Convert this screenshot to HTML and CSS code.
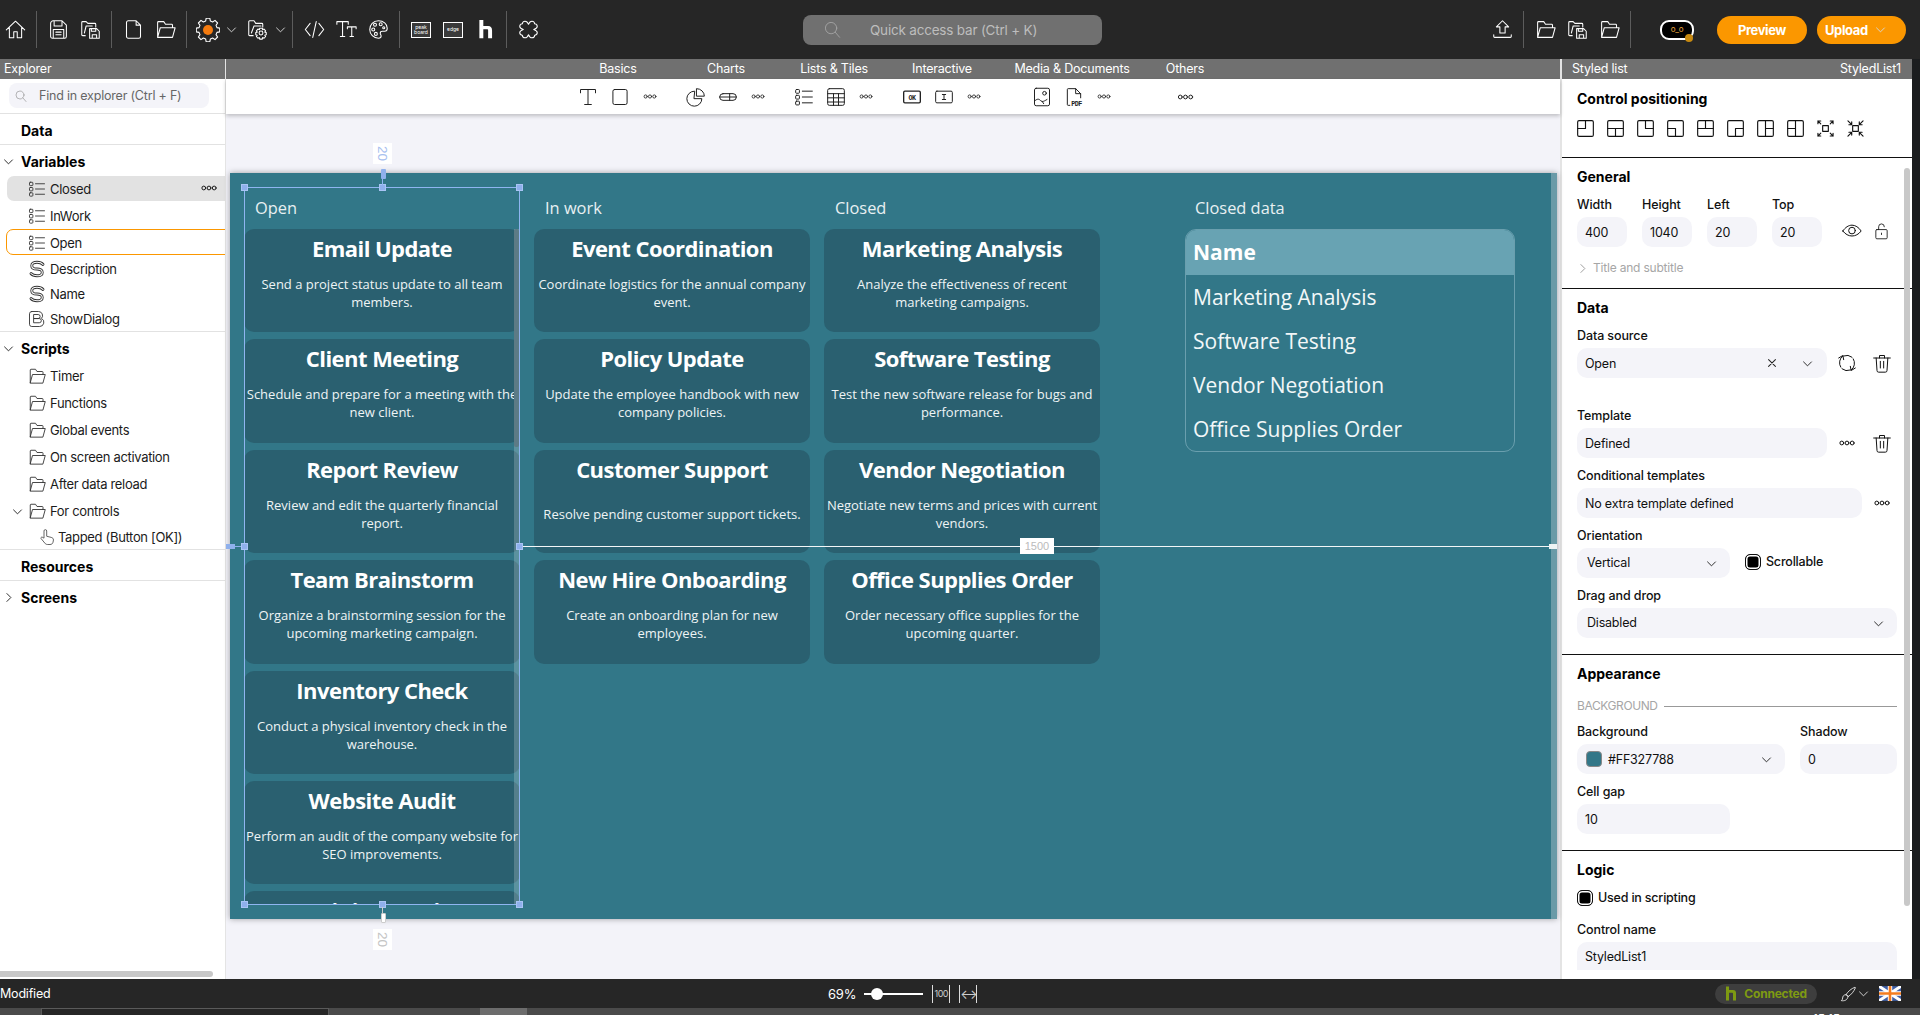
FILE: index.html
```html
<!DOCTYPE html>
<html lang="en">
<head>
<meta charset="utf-8">
<title>Studio</title>
<link rel="stylesheet" href="styles.css">
</head>
<body>
<svg class="defs" width="0" height="0">
<defs>
<symbol id="i-home" viewBox="0 0 24 24"><path d="M1.500 12.500 12 2.500l10.500 10M5 10v11.500h5v-7h4v7h5V10"/></symbol>
<symbol id="i-save" viewBox="0 0 24 24"><path d="M6 2h10l5 5v13a2 2 0 0 1-2 2H5a2 2 0 0 1-2-2V5a3 3 0 0 1 3-3zM7 2v6h9V2M6 22v-10h12v10M9 15h6M9 18h6"/></symbol>
<symbol id="i-saveas" viewBox="0 0 24 24"><path d="M6 19H3a1 1 0 0 1-1-1V4a1 1 0 0 1 1-1h4l2 2h8a1 1 0 0 1 1 1v3M5 16 7 8h7M11 11h8l3 3v8H11zM13 11v3h5v-3M14 22v-4h5v4"/></symbol>
<symbol id="i-file" viewBox="0 0 24 24"><path d="M6 2h9l5 5v13a2 2 0 0 1-2 2H6a2 2 0 0 1-2-2V4a2 2 0 0 1 2-2zM15 2v5h5"/></symbol>
<symbol id="i-folder" viewBox="0 0 24 24"><path d="M3 21V4a1 1 0 0 1 1-1h6l2 3h7a1 1 0 0 1 1 1v3M3 21l3-11h17l-3 11z"/></symbol>
<symbol id="i-gear" viewBox="-1 1.700 26 26"><path d="M10 2h4l.6 3 2.400 1 2.600-1.700 2.800 2.800-1.700 2.600 1 2.400 3 .6v4l-3 .6-1 2.400 1.700 2.600-2.800 2.800-2.600-1.700-2.400 1-.6 3h-4l-.6-3-2.400-1-2.600 1.700-2.800-2.800 1.700-2.600-1-2.400-3-.6v-4l3-.6 1-2.400-1.700-2.600 2.800-2.800 2.600 1.700 2.400-1z"/></symbol>
<symbol id="i-foldgear" viewBox="0 0 24 24"><path d="M7 19H3a1 1 0 0 1-1-1V3a1 1 0 0 1 1-1h5l2 3h7a1 1 0 0 1 1 1v3M5 16 8 8h8"/><circle cx="16" cy="16" r="2.200"/><path d="M14.500 10.500h3l.4 1.800 1.600-.8 1.800 2-1 1.500 1.700.5v2.500l-1.700.5 1 1.500-1.800 2-1.600-.8-.4 1.800h-3l-.4-1.800-1.600.8-1.800-2 1-1.500-1.700-.5v-2.500l1.700-.5-1-1.500 1.800-2 1.600.8z"/></symbol>
<symbol id="i-chev" viewBox="0 0 14 14"><path d="m2 5 5 5 5-5"/></symbol>
<symbol id="i-chevr" viewBox="0 0 14 14"><path d="m5 2 5 5-5 5"/></symbol>
<symbol id="i-code" viewBox="0 0 24 24"><path d="M7 5 1.500 12 7 19M17 5l5.500 7L17 19M14 3l-4 18"/></symbol>
<symbol id="i-tt" viewBox="0 0 24 24"><path d="M1 6V3h13v3M7.500 3v17M5 20h5M13 11V9h10v2M18 9v11M16 20h4"/></symbol>
<symbol id="i-palette" viewBox="0 0 24 24"><path d="M12 2C6 2 2 6.500 2 12s4.500 10 10 10c2 0 3-1 3-2.500s-1-2-1-3.300 1-2.200 2.500-2.200H19c2 0 3-1.500 3-3.500C22 5.500 17.500 2 12 2z"/><circle cx="8" cy="6.500" r="1.700"/><circle cx="14.500" cy="6" r="1.700"/><circle cx="6" cy="12" r="1.700"/><circle cx="18" cy="10" r="1.200"/><circle cx="9" cy="17" r="1.700"/></symbol>
<symbol id="i-puzzle" viewBox="0 0 24 24"><path d="M12 6C11 3.500 9.500 2.500 8 2.500 6 2.500 5 4 5 5.500 3.500 5.500 2 6.500 2 8.500 2 10 3.500 11 6 12 3.500 13 2 14 2 15.500 2 17.500 3.500 18.500 5 18.500 5 20 6 21.500 8 21.500 9.500 21.500 11 20.500 12 18 13 20.500 14.500 21.500 16 21.500 18 21.500 19 20 19 18.500 20.500 18.500 22 17.500 22 15.500 22 14 20.500 13 18 12 20.500 11 22 10 22 8.500 22 6.500 20.500 5.500 19 5.500 19 4 18 2.500 16 2.500 14.500 2.500 13 3.500 12 6z"/></symbol>
<symbol id="i-upload" viewBox="0 0 24 24"><path d="M12 2 5 9h4v7h6V9h4zM2 18v2a1 1 0 0 0 1 1h18a1 1 0 0 0 1-1v-2"/></symbol>
<symbol id="i-search" viewBox="0 0 24 24"><circle cx="10" cy="10" r="8"/><path d="m16 16 6 7"/></symbol>
<symbol id="i-t" viewBox="0 0 24 24"><path d="M3 7V3h18v4M12 3v18M8 21h8"/></symbol>
<symbol id="i-rect" viewBox="0 0 24 24"><rect x="3.500" y="3" width="17" height="18" rx="2"/></symbol>
<symbol id="i-dots" viewBox="0 0 16 6"><circle cx="2.800" cy="3" r="1.900"/><circle cx="8" cy="3" r="1.900"/><circle cx="13.200" cy="3" r="1.900"/></symbol>
<symbol id="i-pie" viewBox="0 0 24 24"><path d="M10 5a9 9 0 1 0 9 9h-9zM13 2a9 9 0 0 1 9 9h-9z"/></symbol>
<symbol id="i-toggle" viewBox="0 0 24 24"><rect x="2" y="8" width="20" height="8" rx="4"/><path d="M2 12h20M14 8v8"/></symbol>
<symbol id="i-list" viewBox="0 0 24 24"><rect x="2" y="3" width="4.500" height="4.500" rx="1"/><rect x="2" y="10" width="4.500" height="4.500" rx="1"/><rect x="2" y="17" width="4.500" height="4.500" rx="1"/><path d="M10 5h12M10 12h12M10 19h12"/></symbol>
<symbol id="i-table" viewBox="0 0 24 24"><rect x="2" y="2" width="20" height="20" rx="2"/><path d="M2 8h20M2 13h20M2 18h20M9 8v14M15 8v14"/></symbol>
<symbol id="i-input" viewBox="0 0 24 24"><rect x="2" y="5" width="20" height="14" rx="1.500"/><path d="M10 9h4M12 9v6M10 15h4"/></symbol>
<symbol id="i-btn" viewBox="0 0 24 24"><rect x="2" y="5" width="20" height="14" rx="1.500" stroke-width="1.600"/><text x="12" y="15.500" class="svg-txt" text-anchor="middle">OK</text></symbol>
<symbol id="i-image" viewBox="0 0 24 24"><rect x="3" y="1.500" width="18" height="21" rx="2"/><circle cx="15" cy="7.500" r="2.200"/><path d="M3 17c3-3 5-3 7-1s3 2 8-1M12 17l2 3"/></symbol>
<symbol id="i-pdf" viewBox="0 0 24 24"><path d="M7 22H5a1 1 0 0 1-1-1V3a1 1 0 0 1 1-1h9l6 6v5M14 2v6h6"/><text x="15" y="22.500" class="svg-txt" text-anchor="middle">PDF</text></symbol>
<symbol id="i-s" viewBox="0 0 24 24"><path d="M20 6C18 3.500 15.500 3 12 3 8 3 5 4.500 5 7.500S8 12 12 12s7 1.500 7 4.500-3 4.500-7 4.500c-3.500 0-6-.5-8-3" stroke-width="3.800"/><path d="M20 6C18 3.500 15.500 3 12 3 8 3 5 4.500 5 7.500S8 12 12 12s7 1.500 7 4.500-3 4.500-7 4.500c-3.500 0-6-.5-8-3" stroke="#fff" stroke-width="1.500"/></symbol>
<symbol id="i-b" viewBox="0 0 24 24"><path d="M5 2h9a5.500 5.500 0 0 1 4 9.200A5.700 5.700 0 0 1 15.500 22H5a3 3 0 0 1-3-3V5a3 3 0 0 1 3-3z"/><path d="M8 6h5.500a2.700 2.700 0 0 1 0 5.400H8zM8 11.400h7a2.800 2.800 0 0 1 0 5.600H8z"/></symbol>
<symbol id="i-hand" viewBox="0 0 24 24"><path d="M8 13V4a1.800 1.800 0 0 1 3.600 0v7l6 1.500c2 .6 3 1.500 3 3.500l-.6 3c-.4 2-2 3-4 3h-3c-2 0-3-.6-4-2l-5-6c-.7-1 .7-2.600 2-1.700z"/></symbol>
<symbol id="i-eye" viewBox="0 0 24 24"><path d="M1 12c3-4.500 7-7 11-7s8 2.500 11 7c-3 4-7 6-11 6s-8-2-11-6z"/><circle cx="12" cy="11.500" r="4"/></symbol>
<symbol id="i-lock" viewBox="0 0 24 24"><rect x="4" y="10" width="16" height="13" rx="1.500"/><path d="M8 10V6a4 4 0 0 1 8 0M12 15v2"/></symbol>
<symbol id="i-x" viewBox="0 0 14 14"><path d="m3 3 8 8M11 3l-8 8"/></symbol>
<symbol id="i-refresh" viewBox="0 0 24 24"><path d="M4.500 17A10 10 0 0 1 7 3.500M2 6l5-3 1 5M19.500 7A10 10 0 0 1 17 20.500M22 18l-5 3-1-5M8 3.500A10 10 0 0 1 18 5M16 20.500A10 10 0 0 1 6 19"/></symbol>
<symbol id="i-trash" viewBox="0 0 24 24"><path d="M2 6h20M9 6V3h6v3M5 6l1 15a2 2 0 0 0 2 2h8a2 2 0 0 0 2-2l1-15M10 10v8M14 10v8"/></symbol>
<symbol id="i-brush" viewBox="0 0 24 24"><path d="M22 2c-5 2-10 6-13 11l3 3c5-3 9-8 11-13zM9 13c-4 0-5 3-5 5s-1 3-2 4c4 .5 9 0 10-6z"/></symbol>
<symbol id="p1" viewBox="0 0 18 18"><rect x=".7" y=".7" width="16.600" height="16.600" rx="1.500"/><path d="M9 1v8H1"/></symbol>
<symbol id="p2" viewBox="0 0 18 18"><rect x=".7" y=".7" width="16.600" height="16.600" rx="1.500"/><path d="M1 9h16M9 9v8"/></symbol>
<symbol id="p3" viewBox="0 0 18 18"><rect x=".7" y=".7" width="16.600" height="16.600" rx="1.500"/><path d="M9 1v8h8"/></symbol>
<symbol id="p4" viewBox="0 0 18 18"><rect x=".7" y=".7" width="16.600" height="16.600" rx="1.500"/><path d="M1 9h8v8"/></symbol>
<symbol id="p5" viewBox="0 0 18 18"><rect x=".7" y=".7" width="16.600" height="16.600" rx="1.500"/><path d="M1 9h16M9 9V1"/></symbol>
<symbol id="p6" viewBox="0 0 18 18"><rect x=".7" y=".7" width="16.600" height="16.600" rx="1.500"/><path d="M17 9H9v8"/></symbol>
<symbol id="p7" viewBox="0 0 18 18"><rect x=".7" y=".7" width="16.600" height="16.600" rx="1.500"/><path d="M9 1v16M9 9h8"/></symbol>
<symbol id="p8" viewBox="0 0 18 18"><rect x=".7" y=".7" width="16.600" height="16.600" rx="1.500"/><path d="M9 1v16M9 9H1"/></symbol>
<symbol id="p9" viewBox="0 0 18 18"><rect x="6" y="6" width="6" height="6"/><path d="M1 4V1h3M1 1l3 3M14 1h3v3M17 1l-3 3M1 14v3h3M1 17l3-3M17 14v3h-3M17 17l-3-3"/></symbol>
<symbol id="p10" viewBox="0 0 18 18"><rect x="6" y="6" width="6" height="6"/><path d="M1 1l4 4M5 2v3H2M17 1l-4 4M13 2v3h3M1 17l4-4M5 16v-3H2M17 17l-4-4M13 16v-3h3"/></symbol>
</defs>
</svg>

<div class="app">
  <header class="topbar">
    <div class="tools">
      <span class="tool first"><svg class="ic"><use href="#i-home"/></svg></span>
      <i class="vsep"></i>
      <span class="tool"><svg class="ic"><use href="#i-save"/></svg></span>
      <span class="tool"><svg class="ic"><use href="#i-saveas"/></svg></span>
      <i class="vsep"></i>
      <span class="tool"><svg class="ic"><use href="#i-file"/></svg></span>
      <span class="tool"><svg class="ic"><use href="#i-folder"/></svg></span>
      <i class="vsep"></i>
      <span class="tool gearwrap"><svg class="ic"><use href="#i-gear"/></svg><b class="gear-dot"></b></span>
      <span class="tool-chev"><svg class="chev"><use href="#i-chev"/></svg></span>
      <span class="tool tool-sm"><svg class="ic"><use href="#i-foldgear"/></svg></span>
      <span class="tool-chev"><svg class="chev"><use href="#i-chev"/></svg></span>
      <i class="vsep"></i>
      <span class="tool"><svg class="ic"><use href="#i-code"/></svg></span>
      <span class="tool"><svg class="ic"><use href="#i-tt"/></svg></span>
      <span class="tool"><svg class="ic"><use href="#i-palette"/></svg></span>
      <i class="vsep"></i>
      <span class="tool"><span class="brand">peak<br>board</span></span>
      <span class="tool"><span class="brand">edge</span></span>
      <span class="tool"><svg class="ic logo-h" viewBox="0 0 24 24"><path d="M5 1h4.500v21H5zM9.500 8H15c3 0 4.500 2 4.500 5v9H15v-9c0-.8-.5-1.200-1.200-1.200H9.500z"/></svg></span>
      <i class="vsep"></i>
      <span class="tool"><svg class="ic"><use href="#i-puzzle"/></svg></span>
    </div>
    <div class="quick"><svg class="quick-ic"><use href="#i-search"/></svg><span>Quick access bar (Ctrl + K)</span></div>
    <div class="tools-right">
      <span class="tool"><svg class="ic"><use href="#i-upload"/></svg></span>
      <i class="vsep"></i>
      <span class="tool"><svg class="ic"><use href="#i-folder"/></svg></span>
      <span class="tool"><svg class="ic"><use href="#i-saveas"/></svg></span>
      <span class="tool"><svg class="ic"><use href="#i-folder"/></svg></span>
      <i class="vsep"></i>
      <span class="robot"><span class="robot-eyes">o_o</span><b class="robot-dot"></b></span>
      <button class="btn btn-preview">Preview</button>
      <button class="btn btn-upload">Upload<svg class="chev"><use href="#i-chev"/></svg></button>
    </div>
  </header>

  <div class="workspace">
    <aside class="explorer">
      <div class="subhead">Explorer</div>
      <div class="find"><div class="find-box"><svg class="find-ic"><use href="#i-search"/></svg>Find in explorer (Ctrl + F)</div></div>
      <div class="ex-head bordered"><span class="ex-title">Data</span></div>
      <div class="ex-head"><svg class="ex-chev"><use href="#i-chev"/></svg><span class="ex-title">Variables</span></div>
      <div class="ex-row hov"><svg class="ex-ic"><use href="#i-list"/></svg>Closed<svg class="ex-dots"><use href="#i-dots"/></svg></div>
      <div class="ex-row"><svg class="ex-ic"><use href="#i-list"/></svg>InWork</div>
      <div class="ex-row sel"><svg class="ex-ic"><use href="#i-list"/></svg>Open</div>
      <div class="ex-row short"><svg class="ex-ic"><use href="#i-s"/></svg>Description</div>
      <div class="ex-row short"><svg class="ex-ic"><use href="#i-s"/></svg>Name</div>
      <div class="ex-row short last"><svg class="ex-ic"><use href="#i-b"/></svg>ShowDialog</div>
      <div class="ex-head"><svg class="ex-chev"><use href="#i-chev"/></svg><span class="ex-title">Scripts</span></div>
      <div class="ex-row"><svg class="ex-ic"><use href="#i-folder"/></svg>Timer</div>
      <div class="ex-row"><svg class="ex-ic"><use href="#i-folder"/></svg>Functions</div>
      <div class="ex-row"><svg class="ex-ic"><use href="#i-folder"/></svg>Global events</div>
      <div class="ex-row"><svg class="ex-ic"><use href="#i-folder"/></svg>On screen activation</div>
      <div class="ex-row"><svg class="ex-ic"><use href="#i-folder"/></svg>After data reload</div>
      <div class="ex-row"><svg class="ex-tree"><use href="#i-chev"/></svg><svg class="ex-ic"><use href="#i-folder"/></svg>For controls</div>
      <div class="ex-row child last"><svg class="ex-ic hand"><use href="#i-hand"/></svg>Tapped (Button [OK])</div>
      <div class="ex-head bordered"><span class="ex-title">Resources</span></div>
      <div class="ex-head"><svg class="ex-chev"><use href="#i-chevr"/></svg><span class="ex-title">Screens</span></div>
      <div class="ex-scroll"></div>
    </aside>

    <main class="center">
      <div class="subhead groups">
        <span class="grp">Basics</span><span class="grp">Charts</span><span class="grp">Lists &amp; Tiles</span><span class="grp">Interactive</span><span class="grp media">Media &amp; Documents</span><span class="grp others">Others</span>
      </div>
      <div class="toolbox groups">
        <span class="grp"><svg class="tb"><use href="#i-t"/></svg><svg class="tb"><use href="#i-rect"/></svg><svg class="tb-dots"><use href="#i-dots"/></svg></span>
        <span class="grp"><svg class="tb"><use href="#i-pie"/></svg><svg class="tb"><use href="#i-toggle"/></svg><svg class="tb-dots"><use href="#i-dots"/></svg></span>
        <span class="grp"><svg class="tb"><use href="#i-list"/></svg><svg class="tb"><use href="#i-table"/></svg><svg class="tb-dots"><use href="#i-dots"/></svg></span>
        <span class="grp"><svg class="tb"><use href="#i-btn"/></svg><svg class="tb"><use href="#i-input"/></svg><svg class="tb-dots"><use href="#i-dots"/></svg></span>
        <span class="grp media"><svg class="tb"><use href="#i-image"/></svg><svg class="tb"><use href="#i-pdf"/></svg><svg class="tb-dots"><use href="#i-dots"/></svg></span>
        <span class="grp others"><svg class="tb-dots big"><use href="#i-dots"/></svg></span>
      </div>
      <div class="stage">
        <div class="screen">
          <div class="col">
            <div class="col-title">Open</div>
            <div class="list list-open">
              <article class="card"><h3>Email Update</h3><p>Send a project status update to all team members.</p></article>
              <article class="card"><h3>Client Meeting</h3><p>Schedule and prepare for a meeting with the new client.</p></article>
              <article class="card"><h3>Report Review</h3><p>Review and edit the quarterly financial report.</p></article>
              <article class="card"><h3>Team Brainstorm</h3><p>Organize a brainstorming session for the upcoming marketing campaign.</p></article>
              <article class="card"><h3>Inventory Check</h3><p>Conduct a physical inventory check in the warehouse.</p></article>
              <article class="card"><h3>Website Audit</h3><p>Perform an audit of the company website for SEO improvements.</p></article>
              <article class="card"><h3>Training Session</h3></article>
              <div class="list-track"></div><div class="list-thumb"></div>
            </div>
          </div>
          <div class="col">
            <div class="col-title">In work</div>
            <div class="list">
              <article class="card"><h3>Event Coordination</h3><p>Coordinate logistics for the annual company event.</p></article>
              <article class="card"><h3>Policy Update</h3><p>Update the employee handbook with new company policies.</p></article>
              <article class="card"><h3>Customer Support</h3><p>Resolve pending customer support tickets.</p></article>
              <article class="card"><h3>New Hire Onboarding</h3><p>Create an onboarding plan for new employees.</p></article>
            </div>
          </div>
          <div class="col">
            <div class="col-title">Closed</div>
            <div class="list">
              <article class="card"><h3>Marketing Analysis</h3><p>Analyze the effectiveness of recent<br>marketing campaigns.</p></article>
              <article class="card"><h3>Software Testing</h3><p>Test the new software release for bugs and performance.</p></article>
              <article class="card"><h3>Vendor Negotiation</h3><p>Negotiate new terms and prices with current vendors.</p></article>
              <article class="card"><h3>Office Supplies Order</h3><p>Order necessary office supplies for the upcoming quarter.</p></article>
            </div>
          </div>
          <div class="col col-data">
            <div class="col-title">Closed data</div>
            <div class="table">
              <div class="t-head">Name</div>
              <div class="t-row">Marketing Analysis</div>
              <div class="t-row">Software Testing</div>
              <div class="t-row">Vendor Negotiation</div>
              <div class="t-row">Office Supplies Order</div>
            </div>
          </div>
          <div class="screen-scroll"></div>

          <div class="guide-h"></div>
          <div class="guide-tag">1500</div>
          <div class="guide-end"></div>
          <div class="guide-start"></div>
          <div class="selection">
            <b class="h h-tl"></b><b class="h h-tc"></b><b class="h h-tr"></b>
            <b class="h h-ml"></b><b class="h h-mr"></b>
            <b class="h h-bl"></b><b class="h h-bc"></b><b class="h h-br"></b>
            <i class="conn conn-t"></i><i class="pill pill-t"></i><span class="dist dist-t">20</span>
            <i class="conn conn-b"></i><i class="pill pill-b"></i><span class="dist dist-b">20</span>
          </div>
        </div>
      </div>
    </main>

    <aside class="props">
      <div class="subhead props-head"><span>Styled list</span><span>StyledList1</span></div>
      <div class="props-body">
        <section class="sec sec-pos">
          <h4>Control positioning</h4>
          <div class="pos-icons">
            <svg><use href="#p1"/></svg><svg><use href="#p2"/></svg><svg><use href="#p3"/></svg><svg><use href="#p4"/></svg><svg><use href="#p5"/></svg><svg><use href="#p6"/></svg><svg><use href="#p7"/></svg><svg><use href="#p8"/></svg><svg><use href="#p9"/></svg><svg><use href="#p10"/></svg>
          </div>
        </section>
        <section class="sec sec-gen">
          <h4>General</h4>
          <div class="gen-grid">
            <div><label>Width</label><div class="inp">400</div></div>
            <div><label>Height</label><div class="inp">1040</div></div>
            <div><label>Left</label><div class="inp">20</div></div>
            <div><label>Top</label><div class="inp">20</div></div>
            <svg class="act act-eye"><use href="#i-eye"/></svg>
            <svg class="act act-lock"><use href="#i-lock"/></svg>
          </div>
          <div class="subtitle"><svg class="chev-s"><use href="#i-chevr"/></svg>Title and subtitle</div>
        </section>
        <section class="sec sec-data">
          <h4>Data</h4>
          <label>Data source</label>
          <div class="line">
            <div class="inp w250">Open<svg class="x"><use href="#i-x"/></svg><svg class="chev-d"><use href="#i-chev"/></svg></div>
            <svg class="act act-a"><use href="#i-refresh"/></svg><svg class="act act-b"><use href="#i-trash"/></svg>
          </div>
          <label class="gap30">Template</label>
          <div class="line">
            <div class="inp w250">Defined</div>
            <svg class="act-dots act-a"><use href="#i-dots"/></svg><svg class="act act-b"><use href="#i-trash"/></svg>
          </div>
          <label class="gap10">Conditional templates</label>
          <div class="line">
            <div class="inp w285">No extra template defined</div>
            <svg class="act-dots act-c"><use href="#i-dots"/></svg>
          </div>
          <label class="gap10">Orientation</label>
          <div class="line">
            <div class="inp w153 sel-inp">Vertical<svg class="chev-d"><use href="#i-chev"/></svg></div>
            <span class="check check-o"><b></b>Scrollable</span>
          </div>
          <label class="gap10">Drag and drop</label>
          <div class="inp w320 sel-inp">Disabled<svg class="chev-d"><use href="#i-chev"/></svg></div>
        </section>
        <section class="sec sec-app">
          <h4>Appearance</h4>
          <div class="rule-label"><span>BACKGROUND</span><i></i></div>
          <div class="app-grid">
            <div><label>Background</label><div class="inp color"><b class="swatch"></b>#FF327788<svg class="chev-d"><use href="#i-chev"/></svg></div></div>
            <div><label>Shadow</label><div class="inp">0</div></div>
          </div>
          <label class="gap10">Cell gap</label>
          <div class="inp w153">10</div>
        </section>
        <section class="sec sec-logic">
          <h4>Logic</h4>
          <span class="check check-b"><b></b>Used in scripting</span>
          <label class="gap16">Control name</label>
          <div class="inp w320">StyledList1</div>
        </section>
        <div class="props-scroll"></div>
      </div>
    </aside>
    <div class="edge-strip"></div>
  </div>

  <footer class="status">
    <span class="modified">Modified</span>
    <div class="zoom">
      <span>69%</span>
      <span class="slider"><b></b></span>
      <span class="fit">100</span>
      <span class="fit fit-w">↔</span>
    </div>
    <div class="status-right">
      <span class="conn-pill"><svg class="conn-h" viewBox="0 0 24 30"><path d="M2 1h6v28H2zM8 8h8c4 0 6 2 6 6v15h-6V15c0-1-.5-1.500-1.500-1.500H8z"/></svg>Connected</span>
      <svg class="brush"><use href="#i-brush"/></svg>
      <svg class="chev"><use href="#i-chev"/></svg>
      <svg class="flag" viewBox="0 0 60 40"><rect width="60" height="40" fill="#3f5fa8"/><path d="M0 0l60 40M60 0 0 40" stroke="#fff" stroke-width="8"/><path d="M30 0v40M0 20h60" stroke="#fff" stroke-width="12"/><path d="M30 0v40M0 20h60" stroke="#f47c20" stroke-width="7"/></svg>
    </div>
  </footer>
  <div class="taskbar"><i class="tb-win"></i><i class="tb-active"></i><span class="tb-clock">15:15</span></div>
</div>
</body>
</html>
```
FILE: styles.css
```css
* { box-sizing: border-box; }
html, body { margin: 0; height: 100%; overflow: hidden; }
body { background: #1b1d1f; font: 13px/16px Inter, "Liberation Sans", sans-serif; letter-spacing: -.2px; color: #111; }
.defs { position: absolute; }
svg { fill: none; stroke: currentColor; stroke-width: 1.2; stroke-linecap: round; stroke-linejoin: round; display: block; flex: none; }
.svg-txt { font: 700 8px "Liberation Mono", monospace; fill: currentColor; stroke: none; letter-spacing: -.5px; }
button { font: inherit; border: 0; }

.app { display: flex; flex-direction: column; height: 1015px; }

/* top bar */
.topbar { height: 59px; background: #262626; display: flex; align-items: center; color: #fff; position: relative; }
.tools { display: flex; align-items: center; width: 803px; }
.tool { width: 32px; height: 32px; display: flex; align-items: center; justify-content: center; flex: none; position: relative; }
.tool.first { width: 31px; }
.ic { width: 21px; height: 21px; }
.gearwrap .ic { width: 24px; height: 24px; }
.gear-dot { position: absolute; left: 11px; top: 11px; width: 10px; height: 10px; border-radius: 50%; background: #f47b0f; }
.tool-chev { width: 14px; display: flex; justify-content: center; }
.tool-sm { margin-left: 3px; }
.chev { width: 11px; height: 11px; color: #d8d8d8; }
.vsep { width: 1px; height: 37px; background: #5c5c5c; margin: 0 5px; flex: none; }
.brand { width: 20px; height: 16px; border: 1px solid #fff; display: flex; align-items: center; justify-content: center; text-align: center; font-size: 5px; line-height: 5px; letter-spacing: 0; background: #3a3a3a; }
.logo-h { fill: #fff; stroke: none; }
.quick { width: 299px; height: 30px; border-radius: 8px; background: #707070; display: flex; align-items: center; color: #bdbdbd; font-size: 13.500px; flex: none; }
.quick-ic { width: 17px; height: 17px; margin-left: 21px; margin-right: 29px; color: #a8a8a8; }
.tools-right { display: flex; align-items: center; margin-left: 384px; }
.robot { width: 34px; height: 20px; margin-left: 24px; border: 2px solid #fff; border-radius: 9px; background: #000; color: #e8a33a; font-size: 8px; line-height: 15px; text-align: center; position: relative; }
.robot-dot { position: absolute; right: -1px; bottom: -4px; width: 8px; height: 8px; border-radius: 50%; background: #c88a10; }
.btn { height: 28px; border-radius: 14px; background: #fb9700; color: #fff; font-weight: 700; font-size: 13px; letter-spacing: -.4px; }
.btn-preview { width: 90px; margin-left: 23px; }
.btn-upload { width: 89px; margin-left: 10px; display: flex; align-items: center; padding-left: 8px; gap: 7px; }

.subhead { height: 20px; background: #707070; color: #fff; font-size: 12.500px; line-height: 20px; }

/* layout */
.workspace { flex: 1; display: flex; min-height: 0; }

/* explorer */
.explorer { width: 226px; flex: none; background: #fff; border-right: 1px solid #e4e4e4; position: relative; overflow: hidden; }
.explorer .subhead { padding-left: 4px; }
.find { height: 35px; padding: 4px 16px 0 9px; border-bottom: 1px solid #e2e2e2; }
.find-box { height: 25px; width: 200px; border-radius: 8px; background: #f4f4f9; color: #666; display: flex; align-items: center; padding-top: 1px; font-size: 12.500px; }
.find-ic { width: 12px; height: 12px; margin: 0 12px 0 6px; color: #888; }
.ex-head { height: 30px; padding: 3px 0 0 21px; display: flex; align-items: center; position: relative; }
.ex-head.bordered { border-bottom: 1px solid #e2e2e2; height: 31px; }
.ex-title { font-weight: 700; font-size: 14px; letter-spacing: 0; color: #000; }
.ex-chev { position: absolute; left: 3px; top: 11px; width: 11px; height: 11px; color: #222; }
.ex-row { height: 27px; padding: 1px 0 0 28px; display: flex; align-items: center; color: #1b1b1b; position: relative; font-size: 13px; letter-spacing: -.33px; isolation: isolate; }
.ex-row.short { height: 25px; }
.ex-row.last { height: 26px; border-bottom: 1px solid #e2e2e2; }
.ex-row.child { padding-left: 38px; }
.ex-ic { width: 18px; height: 18px; margin-right: 4px; color: #333; }
.hand { color: #555; margin-right: 2px; }
.ex-row.hov::before { content: ""; position: absolute; left: 7px; right: 0; top: 1px; bottom: 1px; background: #e2e2e2; border-radius: 7px 0 0 7px; z-index: -1; }
.ex-row.sel::before { content: ""; position: absolute; left: 6px; right: -2px; top: 0; bottom: 1px; border: 1px solid #fb9700; border-radius: 7px 0 0 7px; }
.ex-dots { position: absolute; right: 8px; top: 10px; width: 16px; height: 6px; stroke-width: 1; }
.ex-tree { position: absolute; left: 12px; top: 9px; width: 11px; height: 11px; color: #222; }
.ex-scroll { position: absolute; left: 0; top: 912px; width: 213px; height: 6px; border-radius: 0 3px 3px 0; background: #c8c8c8; }

/* center */
.center { width: 1334px; flex: none; display: flex; flex-direction: column; background: #f3f3f9; }
.groups { display: flex; padding-left: 346px; gap: 16px; }
.grp { width: 92px; flex: none; display: flex; justify-content: center; align-items: center; white-space: nowrap; }
.grp.media { margin-left: 22px; }
.grp.others { width: 28px; margin-left: 37px; }
.toolbox { height: 35px; background: #fff; box-shadow: 0 2px 4px rgba(0,0,0,.22); position: relative; z-index: 1; }
.tb { width: 20px; height: 20px; margin: 0 6px; color: #222; }
.tb-dots { width: 14px; height: 5px; margin: 0 7px; color: #222; stroke-width: 1; }
.tb-dots.big { width: 17px; height: 6px; margin: 0 5px; }
.stage { flex: 1; padding: 59px 0 0 4px; min-height: 0; }

/* canvas */
.screen { width: 1327px; height: 746px; background: #327788; box-shadow: 0 0 6px rgba(0,0,0,.35); padding: 14px 0 0 14px; display: flex; gap: 14px; position: relative; color: #fff; font-family: "Open Sans", "Noto Sans", sans-serif; letter-spacing: 0; }
.col { width: 276px; flex: none; }
.col-data { width: 330px; margin-left: 57px; margin-left: 71px; }
.col-title { height: 42px; padding: 0 0 0 11px; font-size: 16.400px; line-height: 42px; color: #e8f0f2; }
.col-data .col-title { padding-left: 10px; }
.list { display: flex; flex-direction: column; gap: 7px; height: 676px; overflow: hidden; position: relative; }
.card { height: 103.400px; flex: none; background: #2a6070; border-radius: 10px; display: flex; flex-direction: column; text-align: center; }
.card h3 { margin: 0; height: 35px; padding-top: 4px; font-size: 22px; line-height: 30px; font-weight: 700; letter-spacing: -.55px; white-space: nowrap; }
.card p { margin: 0; height: 58px; font-size: 13px; line-height: 18px; color: #eef4f5; display: flex; align-items: center; justify-content: center; }
.list-track { position: absolute; right: 1px; top: 0; bottom: 0; width: 5px; background: rgba(255,255,255,.2); }
.list-thumb { position: absolute; right: 1px; top: 0; height: 218px; width: 5px; background: #5c7b86; border-radius: 2px; }
.table { width: 330px; height: 223px; border: 1px solid #6a9fae; border-radius: 11px; overflow: hidden; }
.t-head { height: 45px; background: #68a3b3; padding-left: 7px; font-size: 21px; font-weight: 700; line-height: 45px; }
.t-row { height: 44px; padding-left: 7px; font-size: 21px; line-height: 44px; color: #f2f7f8; }
.screen-scroll { position: absolute; right: 0; top: 0; bottom: 0; width: 6px; background: #6a9aa8; }

/* selection overlay */
.selection { position: absolute; left: 14px; top: 14px; width: 276px; height: 718px; border: 1px solid #8fb5f0; }
.h { position: absolute; width: 7px; height: 7px; background: #8fb0ec; border: 1px solid #a9c4f5; }
.h-tl, .h-ml, .h-bl { left: -4px; }
.h-tr, .h-mr, .h-br { right: -4px; }
.h-tc, .h-bc { left: 134px; }
.h-tl, .h-tc, .h-tr { top: -4px; }
.h-bl, .h-bc, .h-br { bottom: -4px; }
.h-ml, .h-mr { top: 355px; }
.conn { position: absolute; left: 137px; width: 1px; }
.conn-t { top: -9px; height: 6px; background: #8fb5f0; }
.conn-b { bottom: -9px; height: 6px; background: #ccc; }
.pill { position: absolute; left: 136px; width: 5px; height: 10px; border-radius: 1px; }
.pill-t { top: -19px; background: #8fb0ec; }
.pill-b { bottom: -19px; background: #fff; border: 1px solid #ccc; }
.dist { position: absolute; left: 128px; width: 19px; height: 21px; background: #fff; display: flex; align-items: center; justify-content: center; font: 13.500px/19px "Liberation Sans", sans-serif; writing-mode: vertical-rl; }
.dist-t { top: -45px; color: #a7c0ef; }
.dist-b { bottom: -46px; color: #c4c4c4; }
.guide-h { position: absolute; left: 290px; right: 0; top: 373px; height: 1px; background: #f3f6f7; }
.guide-tag { position: absolute; left: 790px; top: 365px; width: 34px; height: 16px; background: #fff; color: #bbb; font: 11px/16px "Liberation Sans", sans-serif; text-align: center; }
.guide-end { position: absolute; right: 0; top: 371px; width: 8px; height: 5px; background: #eef3f5; }
.guide-start { position: absolute; left: -4px; top: 371px; width: 18px; height: 5px; background: linear-gradient(#8fb0ec, #8fb0ec) left center / 9px 5px no-repeat, linear-gradient(#8fb0ec, #8fb0ec) right center / 9px 1px no-repeat; }

/* properties */
.props { width: 352px; flex: none; background: #fff; display: flex; flex-direction: column; border-left: 2px solid #e4e4e4; }
.props-head { display: flex; justify-content: space-between; padding: 0 11px 0 10px; }
.props-body { height: 900px; overflow: hidden; position: relative; }
.props-body > .props-scroll { position: absolute; right: 2px; top: 89px; height: 738px; width: 6px; border-radius: 3px; background: #c8c8c8; }
.sec { padding: 11px 0 16px 15px; border-bottom: 1px solid #111; }
.sec h4 { margin: 0 0 12px; font-size: 14px; letter-spacing: 0; line-height: 16px; font-weight: 700; color: #000; }
.sec-pos { padding-top: 12px; padding-bottom: 19px; }
.sec-pos h4 { margin-bottom: 11px; }
.pos-icons { display: flex; gap: 13px; height: 20px; align-items: center; }
.pos-icons svg { width: 17px; height: 17px; color: #111; }
.sec-gen { padding-bottom: 12px; }
label { display: block; height: 16px; margin-bottom: 4px; font-size: 12.500px; letter-spacing: -.1px; font-weight: 500; color: #111; }
.gen-grid { display: flex; gap: 15px; position: relative; }
.gen-grid > div { width: 50px; }
.inp { height: 30px; border-radius: 10px; background: #f4f4f9; padding: 1px 0 0 8px; display: flex; align-items: center; font-size: 12.500px; position: relative; color: #111; }
.act { width: 20px; height: 20px; color: #111; }
.act-eye { position: absolute; left: 265px; top: 24px; }
.act-lock { position: absolute; left: 296px; top: 25px; width: 17px; height: 18px; }
.subtitle { margin-top: 13px; height: 16px; display: flex; align-items: center; color: #a6a6a6; font-size: 12px; }
.chev-s { width: 11px; height: 11px; margin: 0 5px 0 0; color: #999; }
.sec-data { padding-bottom: 16px; }
.line { display: flex; align-items: center; position: relative; height: 30px; }
.line .act, .line .act-dots { position: absolute; }
.act-a { left: 260px; }
.act-b { left: 295px; }
.act-c { left: 297px; }
.act-dots { width: 16px; height: 6px; top: 12px; color: #111; stroke-width: 1; }
.act-a.act-dots { left: 262px; }
.gap30 { margin-top: 30px; }
.gap10 { margin-top: 10px; }
.gap16 { margin-top: 16px; }
.w250 { width: 250px; }
.w285 { width: 285px; }
.w153 { width: 153px; }
.w320 { width: 320px; }
.inp.sel-inp { padding: 0 0 0 10px; }
.chev-d { position: absolute; right: 13px; top: 10px; width: 11px; height: 11px; color: #222; }
.w250 .chev-d { right: 14px; }
.x { position: absolute; right: 49px; top: 9px; width: 12px; height: 12px; color: #222; }
.check { display: inline-flex; align-items: center; margin-left: 15px; height: 16px; font-size: 12.500px; font-weight: 500; }
.check-o { margin-bottom: 3px; }
.check b { width: 16px; height: 16px; border: 1.500px solid #111; border-radius: 5px; background: #000; box-shadow: inset 0 0 0 1.500px #fff; margin-right: 5px; }
.check-b { margin-left: 0; display: flex; margin-top: 1px; }
.rule-label { display: flex; align-items: center; gap: 6px; height: 16px; margin: 16px 0 10px; color: #a6a6a6; font-size: 12px; letter-spacing: -.4px; width: 320px; }
.rule-label i { flex: 1; height: 1px; background: #999; }
.sec-app h4 { margin-bottom: 0; }
.app-grid { display: flex; gap: 15px; width: 320px; }
.app-grid > div:first-child { width: 208px; }
.app-grid > div:last-child { flex: 1; }
.color { padding-left: 31px; }
.swatch { position: absolute; left: 9px; top: 7px; width: 16px; height: 16px; border-radius: 4px; background: #327788; border: 1px solid #888; }
.sec-logic { border-bottom: 0; padding-bottom: 0; }
.sec-logic .inp { border-radius: 10px 10px 0 0; height: 28px; padding-top: 2px; }

.edge-strip { width: 8px; flex: none; background: #1b1d1f; }

/* status */
.status { height: 29px; background: #262626; color: #fff; display: flex; align-items: center; position: relative; }
.modified { width: 828px; font-size: 12.500px; }
.zoom { display: flex; align-items: center; }
.slider { width: 59px; height: 2px; margin-left: 8px; background: #fff; position: relative; }
.slider b { position: absolute; left: 7px; top: -5px; width: 12px; height: 12px; border-radius: 50%; background: #fff; }
.fit { margin-left: 9px; width: 18px; height: 18px; border: solid #ddd; border-width: 0 1px; font-size: 9px; line-height: 18px; text-align: center; letter-spacing: -.5px; color: #ccc; }
.fit-w { font-size: 13px; }
.status-right { margin-left: 738px; display: flex; align-items: center; }
.conn-pill { width: 102px; height: 20px; border-radius: 10px; background: #3e3e3e; color: #7e9a12; font-weight: 700; font-size: 12px; display: flex; align-items: center; padding-left: 10px; gap: 7px; }
.conn-h { width: 12px; height: 15px; fill: #7e9a12; stroke: none; }
.brush { width: 16px; height: 16px; margin-left: 23px; color: #fff; }
.status-right .chev { margin-left: 2px; }
.flag { width: 22px; height: 15px; margin-left: 10px; stroke: none; }

/* taskbar strip */
.taskbar { height: 7px; background: #4a4a4a; display: flex; position: relative; overflow: hidden; }
.tb-win { position: absolute; left: 41px; top: 0; width: 288px; height: 7px; background: #262626; border: 1px solid #5a5a5a; border-bottom: 0; }
.tb-active { position: absolute; left: 480px; top: 0; width: 47px; height: 7px; background: #6c6c6c; }
.tb-clock { position: absolute; left: 1813px; top: 3px; color: #fff; font-size: 12px; }
```
